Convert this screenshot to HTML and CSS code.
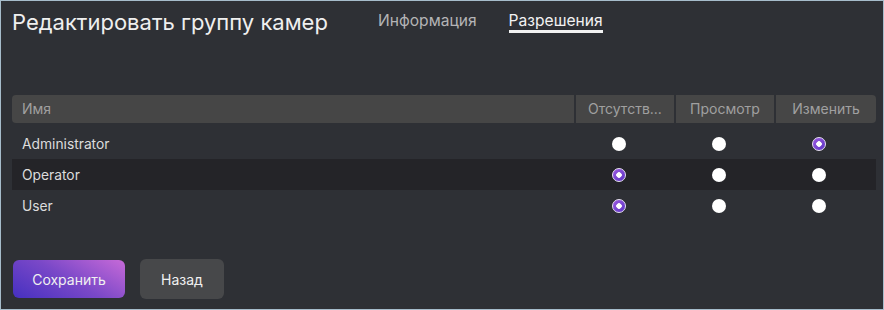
FILE: index.html
```html
<!DOCTYPE html>
<html lang="ru">
<head>
    <meta charset="UTF-8">
    <title>Редактировать группу камер</title>
    <link rel="stylesheet" href="styles.css">
</head>
<body>
    <div class="dialog">
        <div class="dialog-head">
            <h1>Редактировать группу камер</h1>
            <div class="tabs">
                <span class="tab">Информация</span>
                <span class="tab active">Разрешения</span>
            </div>
        </div>

        <div class="perm-table">
            <div class="perm-header">
                <div class="hcell name">Имя</div>
                <div class="hcell">Отсутств...</div>
                <div class="hcell">Просмотр</div>
                <div class="hcell">Изменить</div>
            </div>
            <div class="perm-row">
                <div class="name">Administrator</div>
                <div class="cell"><span class="radio"></span></div>
                <div class="cell"><span class="radio"></span></div>
                <div class="cell"><span class="radio checked"></span></div>
            </div>
            <div class="perm-row odd">
                <div class="name">Operator</div>
                <div class="cell"><span class="radio checked"></span></div>
                <div class="cell"><span class="radio"></span></div>
                <div class="cell"><span class="radio"></span></div>
            </div>
            <div class="perm-row">
                <div class="name">User</div>
                <div class="cell"><span class="radio checked"></span></div>
                <div class="cell"><span class="radio"></span></div>
                <div class="cell"><span class="radio"></span></div>
            </div>
        </div>

        <div class="actions">
            <button class="btn primary">Сохранить</button>
            <button class="btn secondary">Назад</button>
        </div>
    </div>
</body>
</html>
```

FILE: styles.css
```css
* {
    margin: 0;
    padding: 0;
    box-sizing: border-box;
}

body {
    font-family: 'Inter', 'Noto Sans', sans-serif;
    background: #2e3035;
    width: 884px;
    height: 310px;
    overflow: hidden;
}

.dialog {
    width: 884px;
    height: 310px;
    border: 1px solid #a6bccb;
    background: #2e3035;
    padding: 0 7px 0 11px;
    display: flex;
    flex-direction: column;
}

.dialog-head {
    display: flex;
    align-items: flex-start;
    height: 94px;
    padding-top: 6px;
}

h1 {
    font-size: 22px;
    font-weight: 400;
    color: #efefef;
    line-height: 30px;
    width: 366px;
}

.tabs {
    display: flex;
    gap: 32px;
    padding-top: 4px;
}

.tab {
    font-size: 15.6px;
    color: #b4b4b6;
    line-height: 19px;
}

.tab.active {
    color: #f2f2f2;
    border-bottom: 3px solid #f2f2f2;
}

.perm-table {
    width: 864px;
}

.perm-header {
    display: grid;
    grid-template-columns: 1fr 98px 98px 100px;
    column-gap: 2px;
    height: 28px;
    margin-bottom: 5px;
}

.hcell {
    background: #464646;
    color: #a0a0a0;
    font-size: 14px;
    line-height: 28px;
    text-align: center;
}

.hcell.name {
    text-align: left;
    padding-left: 10px;
    border-radius: 4px 0 0 4px;
}

.hcell:last-child {
    border-radius: 0 4px 4px 0;
}

.perm-row {
    display: grid;
    grid-template-columns: 1fr 100px 100px 100px;
    padding-right: 7px;
    height: 31px;
    align-items: center;
}

.perm-row.odd {
    background: #242428;
}

.perm-row .name {
    padding-left: 10px;
    font-size: 13.8px;
    color: #dcdcdc;
}

.cell {
    display: flex;
    justify-content: center;
}

.radio {
    width: 14px;
    height: 14px;
    border-radius: 50%;
    background: #fff;
    display: block;
}

.radio.checked {
    background: radial-gradient(circle, #fff 0 2.5px, transparent 3px),
                linear-gradient(135deg, #9c5ae0, #5b33c4);
    border: 1px solid #e8e0f4;
}

.actions {
    display: flex;
    gap: 15px;
    align-items: center;
    margin-top: 38px;
    padding-left: 1px;
}

.btn {
    font-family: inherit;
    font-size: 14px;
    color: #f0f0f0;
    border: none;
    border-radius: 6px;
    cursor: pointer;
}

.btn.primary {
    width: 112px;
    height: 38px;
    background: linear-gradient(30deg, #4530c0, #7a48c8 50%, #c76ad8);
}

.btn.secondary {
    width: 84px;
    height: 40px;
    background: #47484a;
}
```
